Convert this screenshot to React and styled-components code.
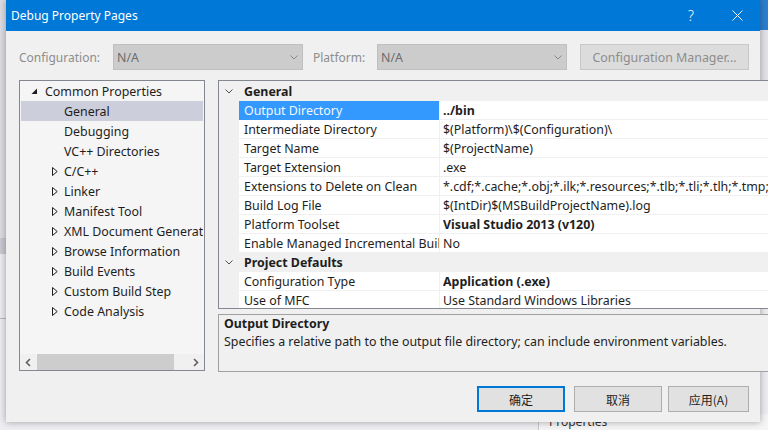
import React from 'react';
import styled, { createGlobalStyle } from 'styled-components';

const GlobalStyle = createGlobalStyle`
    html, body {
        margin: 0;
        padding: 0;
        overflow: hidden;
    }
    body {
        font-family: "Noto Sans", "Noto Sans CJK SC", sans-serif;
        font-size: 12.4px;
        color: #1e1e1e;
    }
`;

const Desktop = styled.div`
    position: relative;
    width: 768px;
    height: 430px;
    overflow: hidden;
    background: #e6e6eb;
    display: flex;
    flex-direction: column;
`;

const IdeTop = styled.div`
    flex: 1;
    display: flex;
`;

const IdeLeft = styled.div`
    width: 540px;
    background: linear-gradient(#dcdce2 0 238px, #c9c9d2 238px 254px, #ececf0 254px 318px, #b9b9c4 318px 319px, #ededf1 319px);
`;

const IdeRight = styled.div`
    flex: 1;
    background: linear-gradient(#2b7fcf 0 30px, #e2e2e8 30px 92px, #c6c6d0 92px 150px, #ededf1 150px);
`;

const IdeStatus = styled.div`
    height: 16px;
    display: flex;
    background: #eeeef2;
`;

const IdeGap = styled.div`
    width: 538px;
    border-right: 1px solid #c6c6ce;
`;

const IdePanelTitle = styled.div`
    flex: 1;
    padding-left: 10px;
    line-height: 16px;
    font-size: 12px;
    color: #333;
    background: #f5f5f5;
`;

const Dialog = styled.div`
    position: absolute;
    left: 6px;
    top: 0;
    width: 754px;
    height: 422px;
    background: #f0f0f0;
    box-shadow: 0 0 7px rgba(0, 0, 0, 0.35);
    display: flex;
    flex-direction: column;
`;

const TitleBar = styled.div`
    height: 31px;
    background: #0078d7;
    color: #fff;
    display: flex;
    align-items: center;
    padding-left: 5px;
`;

const TitleText = styled.div`
    flex: 1;
    font-size: 12px;
`;

const TitleButton = styled.div`
    width: 46px;
    height: 31px;
    display: flex;
    align-items: center;
    justify-content: center;
    font-size: 14px;
    font-weight: 300;
`;

const ConfigRow = styled.div`
    display: flex;
    align-items: center;
    height: 26px;
    margin: 13px 11px 0 13px;
`;

const ConfigLabel = styled.span`
    color: #8d8d8d;
    width: ${p => p.w}px;
    font-size: 12px;
`;

const Combo = styled.div`
    box-sizing: border-box;
    width: ${p => p.w}px;
    height: 26px;
    background: #cccccc;
    border: 1px solid #bfbfbf;
    display: flex;
    align-items: center;
    padding: 0 4px 0 3px;
    color: #6d6d6d;
    margin-right: ${p => p.mr}px;
`;

const ComboText = styled.span`
    flex: 1;
`;

const ManagerButton = styled.div`
    box-sizing: border-box;
    width: 169px;
    height: 26px;
    margin-left: auto;
    background: #dcdcdc;
    border: 1px solid #c8c8c8;
    color: #8d8d8d;
    display: flex;
    align-items: center;
    justify-content: center;
`;

const Main = styled.div`
    display: flex;
    margin: 10px 11px 0 13px;
    gap: 13px;
`;

const Tree = styled.div`
    box-sizing: border-box;
    width: 186px;
    height: 291px;
    border: 1px solid #828790;
    background: #f5f5f5;
    display: flex;
    flex-direction: column;
`;

const TreeBody = styled.div`
    flex: 1;
    padding: 0 1px;
    overflow: hidden;
`;

const TreeRow = styled.div`
    height: 20px;
    display: flex;
    align-items: center;
    padding-left: ${p => p.indent}px;
    background: ${p => (p.selected ? '#cccedb' : 'transparent')};
    white-space: nowrap;
    overflow: hidden;
    color: #1e1e1e;
`;

const TreeToggle = styled.span`
    width: ${p => p.w}px;
    flex: none;
    display: inline-flex;
    align-items: center;
`;

const HScroll = styled.div`
    height: 16px;
    display: flex;
    align-items: center;
    background: #f0f0f0;
`;

const ScrollArrow = styled.div`
    width: 17px;
    height: 16px;
    display: flex;
    align-items: center;
    justify-content: center;
`;

const HThumb = styled.div`
    height: 16px;
    width: 137px;
    background: #cdcdcd;
`;

const HTrack = styled.div`
    flex: 1;
`;

const RightColumn = styled.div`
    flex: 1;
    display: flex;
    flex-direction: column;
    gap: 5px;
`;

const Grid = styled.div`
    box-sizing: border-box;
    height: 229px;
    border: 1px solid #828790;
    display: flex;
    background: #fff;
`;

const GridBody = styled.div`
    flex: 1;
    overflow: hidden;
    padding-top: 1px;
    background: #f0f0f0;
`;

const HeaderRow = styled.div`
    height: 19px;
    display: flex;
    background: #f0f0f0;
    font-weight: 700;
`;

const HeaderTitle = styled.span`
    padding: 2px 0 0 5px;
    line-height: 16px;
`;

const Gutter = styled.div`
    width: 20px;
    height: 100%;
    flex: none;
    display: flex;
    align-items: center;
    justify-content: center;
    background: #f0f0f0;
`;

const PropRow = styled.div`
    height: 19px;
    display: flex;
`;

const NameCell = styled.div`
    box-sizing: border-box;
    width: 200px;
    flex: none;
    padding: 2px 0 0 5px;
    line-height: 16px;
    white-space: nowrap;
    overflow: hidden;
    border-bottom: 1px solid ${p => (p.selected ? '#3399ff' : '#f0f0f0')};
    background: ${p => (p.selected ? '#3399ff' : '#fff')};
    color: ${p => (p.selected ? '#f2f8ff' : '#1e1e1e')};
`;

const ValueCell = styled.div`
    box-sizing: border-box;
    flex: 1;
    min-width: 0;
    display: flex;
    align-items: flex-start;
    padding-left: 3px;
    white-space: nowrap;
    overflow: hidden;
    background: #fff;
    border-left: 1px solid #f0f0f0;
    border-bottom: 1px solid #f0f0f0;
    font-weight: ${p => (p.bold ? 700 : 400)};
`;

const ValueText = styled.span`
    flex: 1;
    overflow: hidden;
    padding-top: 2px;
    line-height: 16px;
`;

const DropButton = styled.div`
    box-sizing: border-box;
    width: 17px;
    height: 17px;
    margin-top: 0;
    background: #e9e9e9;
    border: 1px solid #adadad;
    display: flex;
    align-items: center;
    justify-content: center;
`;

const VScroll = styled.div`
    width: 17px;
    background: #f0f0f0;
    display: flex;
    flex-direction: column;
`;

const VArrow = styled.div`
    height: 17px;
    display: flex;
    align-items: center;
    justify-content: center;
`;

const VTrack = styled.div`
    flex: 1;
    padding: 0 1px;
`;

const VThumb = styled.div`
    height: 132px;
    background: #cdcdcd;
`;

const Description = styled.div`
    box-sizing: border-box;
    height: 58px;
    border: 1px solid #a0a0a0;
    background: #f0f0f0;
    padding: 0 5px;
    line-height: 18px;
`;

const DescTitle = styled.div`
    font-weight: 700;
`;

const Footer = styled.div`
    display: flex;
    justify-content: flex-end;
    margin: 14px 11px 0 0;
`;

const Button = styled.div`
    box-sizing: border-box;
    width: ${p => p.w}px;
    height: 26px;
    margin-left: ${p => p.ml || 0}px;
    display: flex;
    align-items: center;
    justify-content: center;
    background: #e1e1e1;
    border: ${p => (p.primary ? '2px solid #0078d7' : '1px solid #adadad')};
    font-family: "Noto Sans CJK SC", sans-serif;
    font-size: 12px;
    color: #1e1e1e;
`;

const Chevron = ({ color = '#8a8a8a', size = 8 }) => (
    <svg width={size} height={size / 2 + 1} viewBox="0 0 8 5">
        <polyline points="0.5,0.5 4,4 7.5,0.5" fill="none" stroke={color} strokeWidth="1" />
    </svg>
);

const Expanded = () => (
    <svg width="7" height="7" viewBox="0 0 7 7">
        <polygon points="6,0.5 6,6 0.5,6" fill="#1e1e1e" />
    </svg>
);

const Collapsed = () => (
    <svg width="6" height="9" viewBox="0 0 6 9">
        <polygon points="0.5,0.5 5.2,4.5 0.5,8.5" fill="none" stroke="#1e1e1e" strokeWidth="1" />
    </svg>
);

const Arrow = ({ dir }) => {
    const pts = {
        up: '1,6 4.5,2.5 8,6',
        down: '1,3 4.5,6.5 8,3',
        left: '6,1 2.5,4.5 6,8',
        right: '3,1 6.5,4.5 3,8',
    }[dir];
    return (
        <svg width="9" height="9" viewBox="0 0 9 9">
            <polyline points={pts} fill="none" stroke="#606060" strokeWidth="1.6" />
        </svg>
    );
};

const CloseIcon = () => (
    <svg width="11" height="11" viewBox="0 0 11 11">
        <path d="M0.5 0.5 L10.5 10.5 M10.5 0.5 L0.5 10.5" stroke="#fff" strokeWidth="1" />
    </svg>
);

const treeItems = [
    { label: 'Common Properties', indent: 10, toggle: 'open' },
    { label: 'General', indent: 43, selected: true },
    { label: 'Debugging', indent: 43 },
    { label: 'VC++ Directories', indent: 43 },
    { label: 'C/C++', indent: 31, toggle: 'closed' },
    { label: 'Linker', indent: 31, toggle: 'closed' },
    { label: 'Manifest Tool', indent: 31, toggle: 'closed' },
    { label: 'XML Document Generator', indent: 31, toggle: 'closed' },
    { label: 'Browse Information', indent: 31, toggle: 'closed' },
    { label: 'Build Events', indent: 31, toggle: 'closed' },
    { label: 'Custom Build Step', indent: 31, toggle: 'closed' },
    { label: 'Code Analysis', indent: 31, toggle: 'closed' },
];

const sections = [
    {
        title: 'General',
        rows: [
            { name: 'Output Directory', value: '../bin', bold: true, selected: true },
            { name: 'Intermediate Directory', value: '$(Platform)\\$(Configuration)\\' },
            { name: 'Target Name', value: '$(ProjectName)' },
            { name: 'Target Extension', value: '.exe' },
            { name: 'Extensions to Delete on Clean', value: '*.cdf;*.cache;*.obj;*.ilk;*.resources;*.tlb;*.tli;*.tlh;*.tmp;*.rsp;*.pgc;*.pgd' },
            { name: 'Build Log File', value: '$(IntDir)$(MSBuildProjectName).log' },
            { name: 'Platform Toolset', value: 'Visual Studio 2013 (v120)', bold: true },
            { name: 'Enable Managed Incremental Build', value: 'No' },
        ],
    },
    {
        title: 'Project Defaults',
        rows: [
            { name: 'Configuration Type', value: 'Application (.exe)', bold: true },
            { name: 'Use of MFC', value: 'Use Standard Windows Libraries' },
            { name: 'Character Set', value: 'Use Unicode Character Set' },
        ],
    },
];

export default function App() {
    return (
        <Desktop>
            <GlobalStyle />
            <IdeTop>
                <IdeLeft />
                <IdeRight />
            </IdeTop>
            <IdeStatus>
                <IdeGap />
                <IdePanelTitle>Properties</IdePanelTitle>
            </IdeStatus>

            <Dialog>
                <TitleBar>
                    <TitleText>Debug Property Pages</TitleText>
                    <TitleButton>?</TitleButton>
                    <TitleButton><CloseIcon /></TitleButton>
                </TitleBar>

                <ConfigRow>
                    <ConfigLabel w={94}>Configuration:</ConfigLabel>
                    <Combo w={190} mr={10}>
                        <ComboText>N/A</ComboText>
                        <Chevron />
                    </Combo>
                    <ConfigLabel w={64}>Platform:</ConfigLabel>
                    <Combo w={190} mr={0}>
                        <ComboText>N/A</ComboText>
                        <Chevron />
                    </Combo>
                    <ManagerButton>Configuration Manager...</ManagerButton>
                </ConfigRow>

                <Main>
                    <Tree>
                        <TreeBody>
                            {treeItems.map(item => (
                                <TreeRow key={item.label} indent={item.indent} selected={item.selected}>
                                    {item.toggle && (
                                        <TreeToggle w={item.toggle === 'open' ? 14 : 12}>
                                            {item.toggle === 'open' ? <Expanded /> : <Collapsed />}
                                        </TreeToggle>
                                    )}
                                    {item.label}
                                </TreeRow>
                            ))}
                        </TreeBody>
                        <HScroll>
                            <ScrollArrow><Arrow dir="left" /></ScrollArrow>
                            <HThumb />
                            <HTrack />
                            <ScrollArrow><Arrow dir="right" /></ScrollArrow>
                        </HScroll>
                    </Tree>

                    <RightColumn>
                        <Grid>
                            <GridBody>
                                {sections.map(section => (
                                    <React.Fragment key={section.title}>
                                        <HeaderRow>
                                            <Gutter><Chevron color="#505050" /></Gutter>
                                            <HeaderTitle>{section.title}</HeaderTitle>
                                        </HeaderRow>
                                        {section.rows.map(row => (
                                            <PropRow key={row.name}>
                                                <Gutter />
                                                <NameCell selected={row.selected}>{row.name}</NameCell>
                                                <ValueCell bold={row.bold}>
                                                    <ValueText>{row.value}</ValueText>
                                                    {row.selected && (
                                                        <DropButton><Chevron color="#606060" /></DropButton>
                                                    )}
                                                </ValueCell>
                                            </PropRow>
                                        ))}
                                    </React.Fragment>
                                ))}
                            </GridBody>
                            <VScroll>
                                <VArrow><Arrow dir="up" /></VArrow>
                                <VTrack><VThumb /></VTrack>
                                <VArrow><Arrow dir="down" /></VArrow>
                            </VScroll>
                        </Grid>
                        <Description>
                            <DescTitle>Output Directory</DescTitle>
                            <div>Specifies a relative path to the output file directory; can include environment variables.</div>
                        </Description>
                    </RightColumn>
                </Main>

                <Footer>
                    <Button w={88} primary>确定</Button>
                    <Button w={88} ml={9}>取消</Button>
                    <Button w={81} ml={6}>应用(A)</Button>
                </Footer>
            </Dialog>
        </Desktop>
    );
}
